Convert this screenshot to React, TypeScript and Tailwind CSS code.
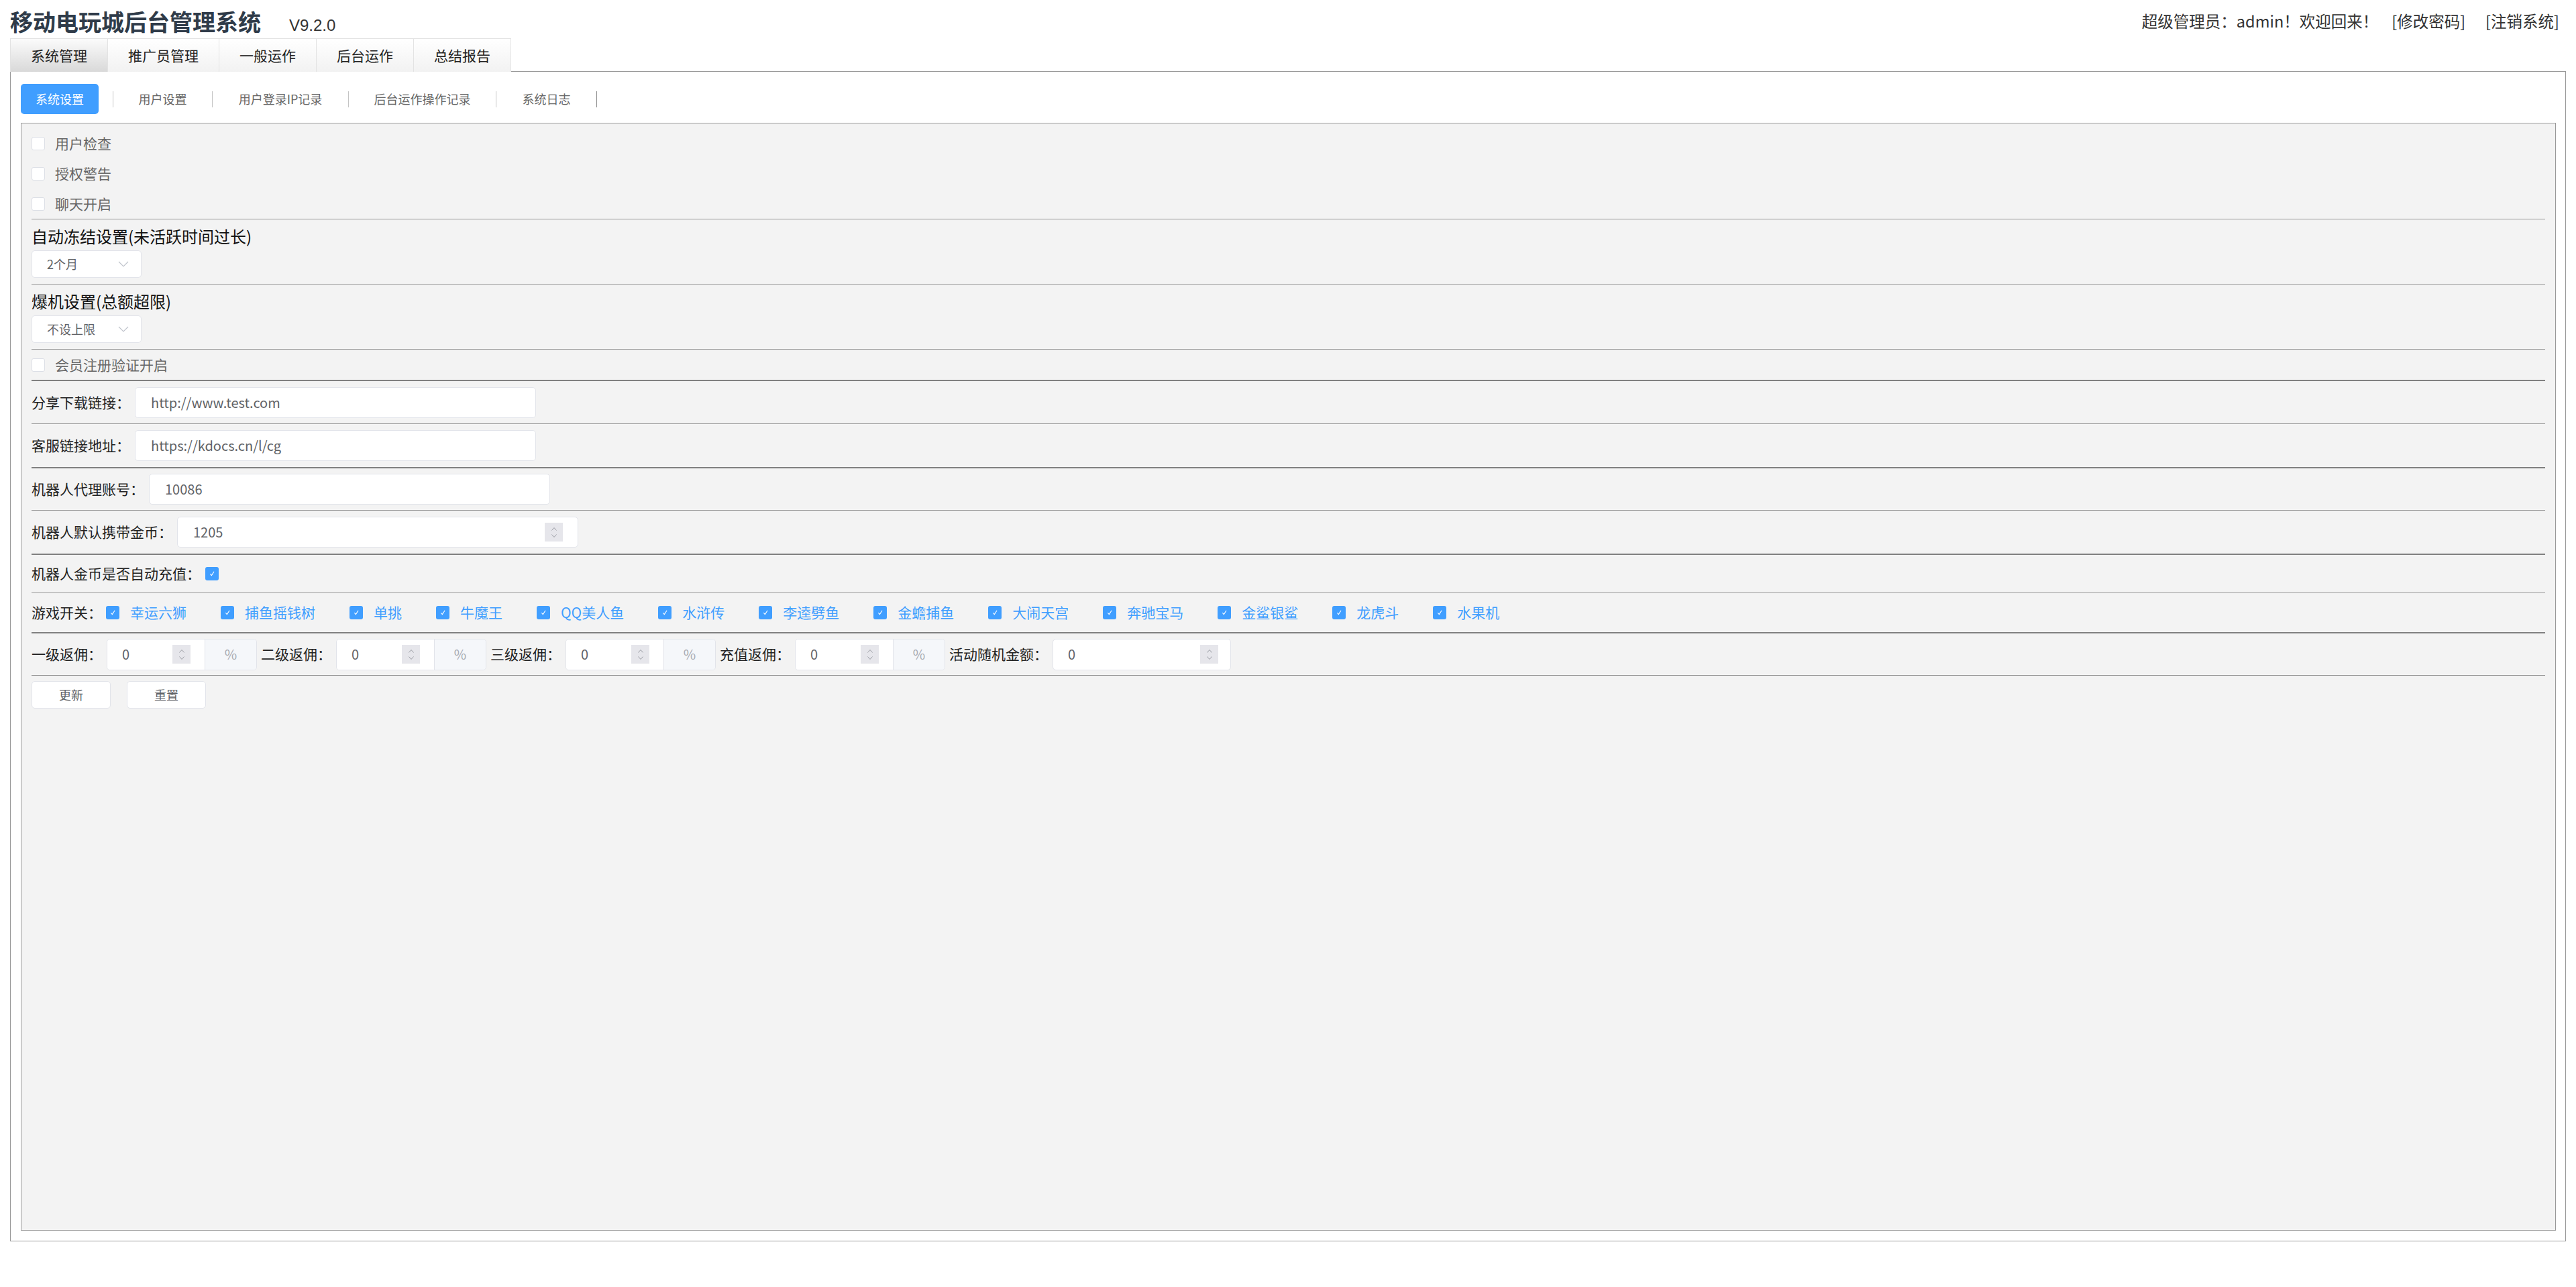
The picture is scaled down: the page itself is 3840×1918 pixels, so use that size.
import type { ReactNode } from 'react';

const TOP_TABS = ['系统管理', '推广员管理', '一般运作', '后台运作', '总结报告'];

const SUB_TABS = [
  { label: '用户设置', width: 'w-[147px]' },
  { label: '用户登录IP记录', width: 'w-[202px]' },
  { label: '后台运作操作记录', width: 'w-[219px]' },
  { label: '系统日志', width: 'w-[149px]' },
];

const GAMES = [
  '幸运六狮',
  '捕鱼摇钱树',
  '单挑',
  '牛魔王',
  'QQ美人鱼',
  '水浒传',
  '李逵劈鱼',
  '金蟾捕鱼',
  '大闹天宫',
  '奔驰宝马',
  '金鲨银鲨',
  '龙虎斗',
  '水果机',
];

const REBATES = ['一级返佣：', '二级返佣：', '三级返佣：', '充值返佣：'];

function Checkbox({ checked = false }: { checked?: boolean }) {
  if (checked) {
    return (
      <span className="w-[20px] h-[20px] rounded-[3px] bg-[#409eff] flex items-center justify-center shrink-0">
        <svg width="12" height="12" viewBox="0 0 12 12" fill="none">
          <path d="M3.5 6.5 L5.3 8.6 L8.8 3.2" stroke="white" strokeWidth="1.1" strokeLinecap="round" strokeLinejoin="round" />
        </svg>
      </span>
    );
  }
  return <span className="w-[20px] h-[20px] rounded-[3px] bg-white border border-[#dcdfe6] shrink-0" />;
}

function Divider({ thick = false }: { thick?: boolean }) {
  return thick ? <div className="h-[2px] bg-[#808080]" /> : <div className="h-px bg-[#959595]" />;
}

function Spinner() {
  return (
    <span className="w-[27px] h-[28px] bg-[#e6e6eb] flex flex-col items-center justify-center gap-[3px] shrink-0">
      <svg width="10" height="7" viewBox="0 0 10 7" fill="none">
        <path d="M1.5 5.5 L5 1.5 L8.5 5.5" stroke="#9a9ca3" strokeWidth="1" />
      </svg>
      <svg width="10" height="7" viewBox="0 0 10 7" fill="none">
        <path d="M1.5 1.5 L5 5.5 L8.5 1.5" stroke="#9a9ca3" strokeWidth="1" />
      </svg>
    </span>
  );
}

function SelectBox({ value }: { value: string }) {
  return (
    <div className="w-[164px] h-[41px] bg-white border border-[#e2e4ea] rounded-[5px] flex items-center pl-[22px] pr-[18px] text-[18px] text-[#606266]">
      <span className="flex-1">{value}</span>
      <svg width="16" height="9" viewBox="0 0 16 9" fill="none">
        <path d="M1 1 L8 8 L15 1" stroke="#c0c4cc" strokeWidth="1.2" />
      </svg>
    </div>
  );
}

function CheckRow({ label }: { label: string }) {
  return (
    <div className="h-[45px] flex items-center">
      <Checkbox />
      <span className="ml-[15px] text-[21px] text-[#666]">{label}</span>
    </div>
  );
}

function FieldRow({ label, children, height }: { label: string; children: ReactNode; height: string }) {
  return (
    <div className={`${height} flex items-center`}>
      <span className="text-[21px] text-[#222] mr-[7px]">{label}</span>
      {children}
    </div>
  );
}

function TextInput({ value, spinner = false }: { value: string; spinner?: boolean }) {
  return (
    <div className="w-[598px] h-[46px] bg-white border border-[#e2e4ea] rounded-[5px] flex items-center pl-[23px] pr-[22px] text-[20px] text-[#606266]">
      <span className="flex-1">{value}</span>
      {spinner && <Spinner />}
    </div>
  );
}

function RebateGroup() {
  return (
    <div className="w-[224px] h-[47px] border border-[#e2e4ea] rounded-[5px] flex overflow-hidden">
      <div className="w-[145px] bg-white flex items-center pl-[22px] pr-[21px] text-[20px] text-[#606266]">
        <span className="flex-1">0</span>
        <Spinner />
      </div>
      <div className="flex-1 bg-[#f5f7fa] border-l border-[#e2e4ea] flex items-center justify-center text-[20px] text-[#a8abb2]">
        %
      </div>
    </div>
  );
}

export default function App() {
  return (
    <div className="w-[3840px] h-[1918px] bg-white text-[#333] [font-family:'Noto_Sans_CJK_SC','Noto_Sans',sans-serif]">
      <header className="flex items-start h-[57px] pl-[15px] pt-[12px]">
        <div className="flex items-baseline">
          <h1 className="text-[34px] leading-[40px] font-bold text-[#2f3b49]">移动电玩城后台管理系统</h1>
          <span className="ml-[42px] text-[24px] text-[#333] [font-family:'Liberation_Sans',sans-serif]">V9.2.0</span>
        </div>
        <div className="ml-auto mr-[25px] mt-[4px] flex text-[23.5px] leading-[30px] text-[#333]">
          <span>超级管理员：admin！欢迎回来！</span>
          <span className="ml-[20px]">[修改密码]</span>
          <span className="ml-[30px]">[注销系统]</span>
        </div>
      </header>

      <nav className="flex ml-[15px] w-[3810px] h-[50px]">
        {TOP_TABS.map((tab, index) => (
          <div
            key={tab}
            className={`px-[30px] flex items-center text-[21px] text-[#222] border-t border-r border-[#e3e3e3] bg-linear-to-b ${
              index === 0 ? 'border-l from-[#fbfbfb] to-[#d9d9d9]' : 'from-white to-[#f2f2f2]'
            }`}
          >
            {tab}
          </div>
        ))}
        <div className="flex-1 border-b border-[#999]" />
      </nav>

      <div className="ml-[15px] w-[3810px] h-[1743px] border border-t-0 border-[#999] flex flex-col pl-[15px] pr-[14px] pt-[18px] pb-[15px]">
        <div className="flex items-center h-[45px]">
          <button className="h-[45px] px-[22px] rounded-[5px] bg-[#409eff] text-white text-[18px]">系统设置</button>
          <span className="ml-[21px] w-px h-[24px] bg-[#c4c4c4]" />
          {SUB_TABS.map((tab, index) => (
            <div key={tab.label} className="flex items-center">
              <span className={`${tab.width} text-center text-[18px] text-[#666]`}>{tab.label}</span>
              <span className={`w-px h-[24px] ${index === SUB_TABS.length - 1 ? 'bg-[#8a8a8a]' : 'bg-[#c4c4c4]'}`} />
            </div>
          ))}
        </div>

        <div className="mt-[13px] flex-1 border border-[#999] bg-[#f3f3f3] px-[15px] pt-[7px]">
          <CheckRow label="用户检查" />
          <CheckRow label="授权警告" />
          <CheckRow label="聊天开启" />
          <Divider />

          <div className="mt-[9px] text-[24px] leading-[32px] text-[#111]">自动冻结设置(未活跃时间过长)</div>
          <div className="mt-[5px]">
            <SelectBox value="2个月" />
          </div>
          <div className="mt-[9px]">
            <Divider />
          </div>

          <div className="mt-[9px] text-[24px] leading-[32px] text-[#111]">爆机设置(总额超限)</div>
          <div className="mt-[5px]">
            <SelectBox value="不设上限" />
          </div>
          <div className="mt-[9px]">
            <Divider />
          </div>

          <CheckRow label="会员注册验证开启" />
          <Divider thick />

          <FieldRow label="分享下载链接：" height="h-[63px]">
            <TextInput value="http://www.test.com" />
          </FieldRow>
          <Divider />
          <FieldRow label="客服链接地址：" height="h-[64px]">
            <TextInput value="https://kdocs.cn/l/cg" />
          </FieldRow>
          <Divider thick />
          <FieldRow label="机器人代理账号：" height="h-[62px]">
            <TextInput value="10086" />
          </FieldRow>
          <Divider />
          <FieldRow label="机器人默认携带金币：" height="h-[64px]">
            <TextInput value="1205" spinner />
          </FieldRow>
          <Divider thick />
          <FieldRow label="机器人金币是否自动充值：" height="h-[56px]">
            <Checkbox checked />
          </FieldRow>
          <Divider />

          <div className="h-[58px] flex items-center">
            <span className="text-[21px] text-[#222] mr-[6px]">游戏开关：</span>
            <div className="flex items-center gap-x-[51px]">
              {GAMES.map((game) => (
                <label key={game} className="flex items-center">
                  <Checkbox checked />
                  <span className="ml-[16px] text-[21px] text-[#409eff]">{game}</span>
                </label>
              ))}
            </div>
          </div>
          <Divider thick />

          <div className="h-[62px] flex items-center gap-x-[6px]">
            {REBATES.map((label) => (
              <div key={label} className="flex items-center">
                <span className="text-[21px] text-[#222] mr-[7px]">{label}</span>
                <RebateGroup />
              </div>
            ))}
            <div className="flex items-center">
              <span className="text-[21px] text-[#222] mr-[7px]">活动随机金额：</span>
              <div className="w-[266px] h-[47px] bg-white border border-[#e2e4ea] rounded-[5px] flex items-center pl-[22px] pr-[18px] text-[20px] text-[#606266]">
                <span className="flex-1">0</span>
                <Spinner />
              </div>
            </div>
          </div>
          <Divider />

          <div className="mt-[8px] flex gap-x-[24px]">
            <button className="w-[118px] h-[41px] bg-white border border-[#e2e4ea] rounded-[5px] text-[18px] text-[#606266]">更新</button>
            <button className="w-[118px] h-[41px] bg-white border border-[#e2e4ea] rounded-[5px] text-[18px] text-[#606266]">重置</button>
          </div>
        </div>
      </div>
    </div>
  );
}
